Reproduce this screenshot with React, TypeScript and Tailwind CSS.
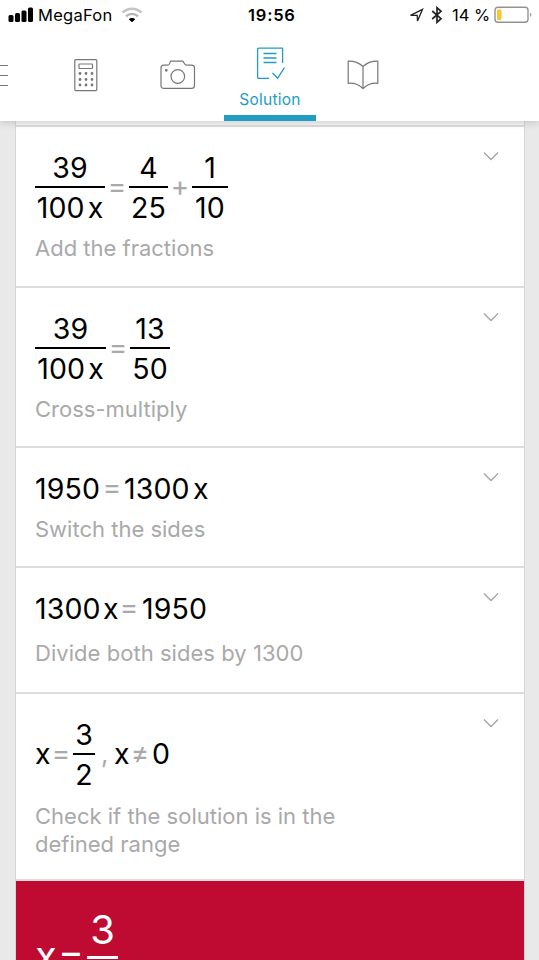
import type { ReactNode } from 'react';
import clsx from 'clsx';

interface StepProps {
  className: string;
  caption: string;
  captionClass?: string;
  children: ReactNode;
}

function Fraction({ top, bottom, className }: { top: ReactNode; bottom: ReactNode; className: string }) {
  return (
    <span className={clsx('flex flex-col text-center', className)}>
      <span className="h-[38px]">{top}</span>
      <span className="h-[2px] bg-black" />
      <span className="h-[38px]">{bottom}</span>
    </span>
  );
}

function Num({ children, className }: { children: ReactNode; className?: string }) {
  return <span className={clsx('tracking-[0.1px]', className)}>{children}</span>;
}

function Op({ children, className }: { children: ReactNode; className: string }) {
  return (
    <span className={clsx('-mt-[2px] flex justify-center text-[28px] text-[#a9a9a9]', className)}>{children}</span>
  );
}

function Step({ className, caption, captionClass, children }: StepProps) {
  return (
    <section className={clsx('relative shrink-0 border-b-2 border-[#dcdcdc] pl-[19px] pt-[21px]', className)}>
      <div className="flex items-center text-[28.5px] leading-[39px] text-black">{children}</div>
      <p className={clsx('w-[330px] text-[22px] leading-[27.5px] text-[#a9a9a9]', captionClass)}>{caption}</p>
      <svg className="absolute right-[25px] top-[23px]" width="17" height="12" fill="none" stroke="#a3a3a3" strokeWidth="1.3">
        <path d="M2 2.5 9 9.5 16 2.5" />
      </svg>
    </section>
  );
}

function StatusBar() {
  return (
    <div className="flex h-[30px] items-center text-[16.5px] leading-[30px] text-black">
      <svg className="ml-[8px]" width="26" height="16" fill="#000">
        <rect x="0.5" y="8" width="5" height="7" rx="1.5" />
        <rect x="7" y="6" width="5" height="9" rx="1.5" />
        <rect x="13.5" y="3.5" width="5" height="11.5" rx="1.5" />
        <rect x="20" y="0.5" width="5" height="14.5" rx="1.5" />
      </svg>
      <span className="ml-[4px] w-[76px] whitespace-nowrap tracking-[0.25px]">MegaFon</span>
      <svg className="ml-[7px]" width="22" height="16" fill="none" strokeWidth="2.4">
        <path d="M1.5 5.5C7 .4 15 .4 20.5 5.5" stroke="#c4c4c4" />
        <path d="M5 9.3C8.5 6 13.5 6 17 9.3" stroke="#b4b4b4" />
        <path d="M8.3 12.3Q11 10.3 13.7 12.3L11 14.7Z" fill="#000" stroke="#000" strokeWidth="1" />
      </svg>
      <span className="ml-[105px] w-[49px] whitespace-nowrap font-semibold tracking-[0.8px]">19:56</span>
      <svg className="ml-[112px]" width="16" height="16" fill="none" stroke="#222" strokeWidth="1.3">
        <path d="M1.5 8.3 13.5 2.3 8.5 14 8.2 8.3Z" />
      </svg>
      <svg className="ml-[6px]" width="12" height="18" fill="none" stroke="#222" strokeWidth="1.7">
        <path d="M1.2 5 10 12.7 6 16.3V1.7L10 5.3 1.2 13" />
      </svg>
      <span className="ml-[9px] w-[39px] whitespace-nowrap">14 %</span>
      <svg className="ml-[3px]" width="40" height="18" fill="none">
        <rect x="1" y="1.2" width="33" height="15" rx="3" stroke="#929292" strokeWidth="1.4" />
        <rect x="3" y="3.5" width="4.5" height="10.5" rx="1" fill="#fdc52d" />
        <path d="M36 6.5Q39 8.8 36 11Z" fill="#999" />
      </svg>
    </div>
  );
}

function NavBar() {
  return (
    <nav className="-ml-[52px] flex h-[91px] text-[#777]">
      <div className="flex w-[92px] shrink-0 justify-center pt-[33px]">
        <svg width="28" height="26" stroke="currentColor" strokeWidth="1.2">
          <path d="M0 2.5H28M0 12.5H28M0 22.5H28" />
        </svg>
      </div>
      <div className="flex w-[92px] shrink-0 justify-center pt-[28px]">
        <svg width="26" height="34" fill="none" stroke="currentColor" strokeWidth="1.2">
          <rect x="1.8" y="1.6" width="22" height="31" rx="1" />
          <rect x="6" y="6" width="13.5" height="4.5" rx=".5" />
          <path
            d="M7 15.5h.01M13 15.5h.01M19 15.5h.01M7 21.5h.01M13 21.5h.01M19 21.5h.01M7 27h.01M13 27h.01M19 27h.01"
            strokeWidth="2.8"
            strokeLinecap="round"
          />
        </svg>
      </div>
      <div className="flex w-[92px] shrink-0 justify-center pt-[30px]">
        <svg width="36" height="30" fill="none" stroke="currentColor" strokeWidth="1.2" strokeLinejoin="round">
          <path d="M3.5 5.2H7.5Q9 5.2 9.6 3.6L10.5 1.2H23L24.5 3.8Q25.3 5.2 26.7 5.2H31.5Q34.5 5.2 34.5 8V25.5Q34.5 28.4 31.5 28.4H4Q1 28.4 1 25.5V8Q1 5.2 3.5 5.2Z" />
          <circle cx="17.8" cy="16.5" r="6.8" />
          <circle cx="6.3" cy="10.3" r=".8" fill="currentColor" />
        </svg>
      </div>
      <div className="flex w-[92px] shrink-0 flex-col items-center border-b-[6px] border-[#219dc3] pt-[17px] text-[#219dc3]">
        <svg width="30" height="34" fill="none" stroke="currentColor" strokeWidth="1.3" strokeLinejoin="round">
          <path d="M14 31.4H4Q2.6 31.4 2.6 30V2.5Q2.6 1.2 4 1.2H27.6V16" />
          <path d="M8.5 6.5H21.5M8.5 11H21.5M8.5 15.5H21.5" />
          <path d="M17.5 26 22.7 31.2 29.5 20.5" />
        </svg>
        <span className="mt-[8px] text-[15.5px] leading-[22px] tracking-[0.25px]">Solution</span>
      </div>
      <div className="flex w-[92px] shrink-0 justify-center pt-[30px]">
        <svg className="ml-px" width="32" height="30" fill="none" stroke="currentColor" strokeWidth="1.2" strokeLinejoin="round">
          <path d="M16 6.5Q10 1 1.2 1.2V23.3Q10 22.5 16 28.6 22 22.5 30.8 23.3V1.2Q22 1 16 6.5V28.6" />
        </svg>
      </div>
    </nav>
  );
}

export default function App() {
  return (
    <div className="flex h-[960px] w-[539px] flex-col overflow-hidden bg-[#e9e9e9] font-['Inter','Liberation_Sans',sans-serif]">
      <header className="relative h-[121px] shrink-0 bg-white shadow-[0_1px_8px_rgba(0,0,0,0.18)]">
        <StatusBar />
        <NavBar />
      </header>

      <main className="ml-[15px] mr-[14px] flex min-h-0 flex-1 flex-col border-x border-[#d6d6d6] bg-white">
        <div className="h-[6px] shrink-0 border-b-2 border-[#dcdcdc] bg-[#f5f5f5]" />

        <Step className="h-[161px]" caption="Add the fractions" captionClass="mt-[9px]">
          <Fraction className="w-[70px]" top={<Num>39</Num>} bottom={<><Num>100</Num><span className="ml-[3px]">x</span></>} />
          <Op className="w-[24px]">=</Op>
          <Fraction className="w-[39px]" top="4" bottom={<Num>25</Num>} />
          <Op className="w-[24px]">+</Op>
          <Fraction className="w-[36px]" top="1" bottom={<Num>10</Num>} />
        </Step>

        <Step className="h-[160px]" caption="Cross-multiply" captionClass="mt-[9px]">
          <Fraction className="w-[71px]" top={<Num>39</Num>} bottom={<><Num>100</Num><span className="ml-[3px]">x</span></>} />
          <Op className="w-[24px]">=</Op>
          <Fraction className="w-[40px]" top={<Num>13</Num>} bottom={<Num>50</Num>} />
        </Step>

        <Step className="h-[120px]" caption="Switch the sides" captionClass="mt-[8px]">
          <Num className="w-[65px]">1950</Num>
          <Op className="w-[24px]">=</Op>
          <Num className="w-[69px]">1300</Num>
          <span>x</span>
        </Step>

        <Step className="h-[126px]" caption="Divide both sides by 1300" captionClass="mt-[12px] tracking-[0.04px]">
          <Num className="w-[68px]">1300</Num>
          <span className="w-[14px]">x</span>
          <Op className="w-[24px]">=</Op>
          <Num className="ml-px">1950</Num>
        </Step>

        <Step className="h-[187px]" caption="Check if the solution is in the defined range" captionClass="mt-[10px]">
          <span className="-mt-[2px] w-[14px]">x</span>
          <Op className="w-[24px]">=</Op>
          <Fraction className="w-[22px]" top="3" bottom="2" />
          <span className="-mt-[2px] ml-[6px] w-[13px] text-[26px] text-[#a9a9a9]">,</span>
          <span className="-mt-[2px] w-[14px]">x</span>
          <Op className="w-[24px]">≠</Op>
          <span className="-mt-[2px]">0</span>
        </Step>

        <section className="h-[260px] shrink-0 bg-[#bf0b31] pl-[19px] pt-[22px] text-[40px] leading-[54px] text-white">
          <div className="flex items-center">
            <span className="-mt-[4px] w-[20px]">x</span>
            <span className="-mt-[4px] flex w-[32px] justify-center">=</span>
            <span className="flex w-[31px] flex-col text-center">
              <span className="h-[53px]">3</span>
              <span className="h-[3px] bg-white" />
              <span className="h-[53px]">2</span>
            </span>
          </div>
        </section>
      </main>
    </div>
  );
}
